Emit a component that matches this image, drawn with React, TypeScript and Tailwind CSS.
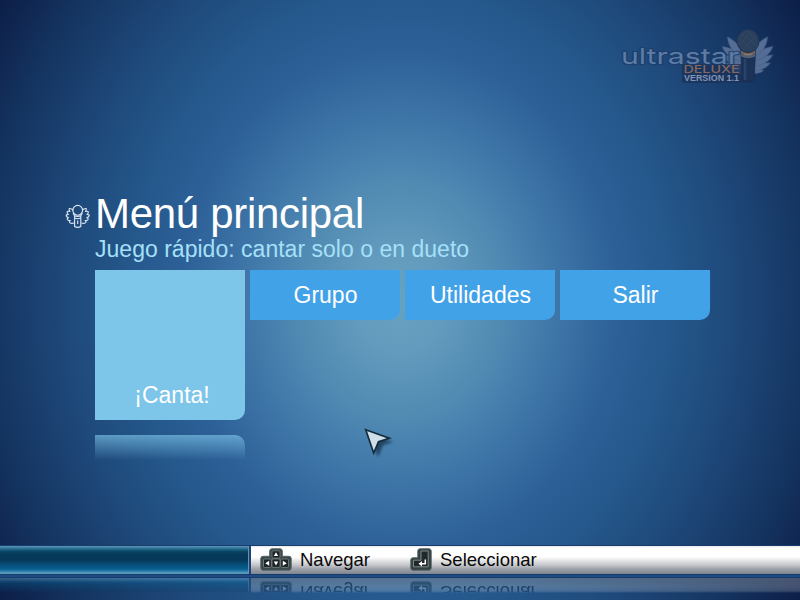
import React from "react";

const FONT = "font-['Liberation_Sans',Arial,sans-serif]";

function Logo() {
  const feathers = [
    "M22 44C17 45 12 44 9.5 41.5C14 40 18 38 22 38Z",
    "M22 42C13 42 6 39 3 34C9 34 17 34 22 36Z",
    "M22 38C11 37 3 32 .5 26C8 27 16 28 22 32Z",
    "M22 33C11 31 2 25 .5 17.6C8 19 16 22 22 27Z",
    "M20 29C12 25 6 17 5.5 8C12 11 18 17 20 23Z",
  ];
  return (
    <svg className="block h-[75px] w-[180px]" viewBox="610 20 180 75">
      {[0, 1].map((side) => (
        <g key={side} transform={side ? "translate(773 29)scale(-1 1)" : "translate(722 29)"}>
          <g fill="#1c3765" stroke="#1c3765" strokeWidth="3" strokeLinejoin="round" opacity=".6">
            {feathers.map((d) => <path key={d} d={d} />)}
          </g>
          <g fill="#536d94" stroke="#46618b" strokeWidth=".5">
            {feathers.map((d) => <path key={d} d={d} />)}
          </g>
        </g>
      ))}
      <rect x="682" y="64" width="71" height="19" rx="3" fill="#1a3159" opacity=".75" />
      <text x="621" y="63.6" fill="#5c7ca5" stroke="#1d3c69" strokeOpacity=".7" strokeWidth="2.6" strokeLinejoin="round" paintOrder="stroke" fontFamily="Inter" fontWeight="400" fontSize="22" textLength="118" lengthAdjust="spacingAndGlyphs">ultrastar</text>
      <text x="683.5" y="73" fill="#86675f" fontFamily="Inter" fontWeight="500" fontSize="10.6" textLength="56" lengthAdjust="spacingAndGlyphs">DELUXE</text>
      <text x="684" y="81" fill="#8294b2" fontFamily="Liberation Sans" fontWeight="700" fontSize="8.6" textLength="55" lengthAdjust="spacingAndGlyphs">VERSION 1.1</text>
      <path d="M740.8 50H755.6L754 80Q748 83 742 80Z" fill="#1c3358" stroke="#172c51" strokeWidth=".8" />
      <path d="M745 59V80" stroke="#29436a" strokeWidth="2.5" />
      <path d="M741 50H755.3V56.5Q748 60 741.2 56.5Z" fill="#526071" />
      <path d="M741.2 50.5Q748 54 755 50.5V53Q748 57 741.2 53Z" fill="#80604c" />
      <path d="M744 54Q748 56 752 54" fill="none" stroke="#8b8078" strokeWidth="1" />
      <ellipse cx="748" cy="41" rx="11" ry="11.6" fill="#2a405d" stroke="#1e3357" />
      <path d="M739 37L752 51M742 33L757 47M746 31L759 42M757 35L743 49M752 31L739 45M747 30L737 40" stroke="#3a506d" strokeWidth=".7" opacity=".6" />
    </svg>
  );
}

function WingedMic() {
  const wing = "M8.3 6.2Q6 4.2 4.2 4.6Q4 6.2 4.8 7.4Q2.6 6.9 2 8Q2.2 9.5 3.4 10.4Q1.2 10.4 1.2 11.8Q1.8 13.3 3.6 13.8Q1.8 14.3 2.4 15.6Q3.5 16.8 5.3 16.6Q3.9 17.5 4.8 18.6Q6.3 19.8 9 19";
  return (
    <svg className="block h-[26px] w-[26px]" viewBox="0 0 26 26" fill="none" stroke="#dbe6f2" strokeWidth="1.15" strokeLinejoin="round">
      <circle cx="12.7" cy="6.3" r="4.9" />
      <path d="M8.2 9L9.6 12V22.6Q12.7 24.3 15.8 22.6V12L17.2 9M9.4 11.8Q12.7 13.2 16 11.8M9.8 14Q12.7 15.5 15.6 14M12.7 16.5V20" />
      <path d={wing} />
      <path d={wing} transform="translate(25.4 0) scale(-1 1)" />
    </svg>
  );
}

function ArrowKeys() {
  return (
    <svg className="block h-[23px] w-[32px] shrink-0" viewBox="0 0 32 23">
      <path d="M12 .8H20Q22.3.8 22.3 3V8.3H29Q31.2 8.3 31.2 10.5V20Q31.2 22.2 29 22.2H3Q.8 22.2.8 20V10.5Q.8 8.3 3 8.3H9.7V3Q9.7.8 12 .8Z" fill="#39484a" stroke="#536264" strokeWidth="1" />
      <g fill="#1b2326" stroke="#87908f" strokeWidth=".7">
        <rect x="12" y="2.8" width="8" height="7.3" rx="1" />
        <rect x="3.5" y="11" width="7.8" height="8.4" rx="1" />
        <rect x="12" y="11" width="8" height="8.4" rx="1" />
        <rect x="20.7" y="11" width="7.8" height="8.4" rx="1" />
      </g>
      <path d="M16 4.2L18.2 7.9H13.8ZM5.2 15.2L9.2 12.7V17.7ZM26.8 15.2L22.8 12.7V17.7ZM16 17.5L13.8 13.5H18.2Z" fill="#fff" />
    </svg>
  );
}

function EnterKey() {
  return (
    <svg className="block h-[23px] w-[22px] shrink-0" viewBox="0 0 22 23">
      <path d="M10 .8H19Q21.2.8 21.2 3V20Q21.2 22.2 19 22.2H3Q.8 22.2.8 20V12Q.8 9.8 3 9.8H7.8V3Q7.8.8 10 .8Z" fill="#333f41" stroke="#536264" />
      <path d="M11 3H18.2V18.8H3.5V12.2H11Z" fill="#20282b" stroke="#8b9493" strokeWidth=".9" />
      <path d="M15.3 11.5V15.8H11" fill="none" stroke="#fff" strokeWidth="1.5" />
      <path d="M8.5 15.8L12 13.1V18.5Z" fill="#fff" />
    </svg>
  );
}

function StatusBar() {
  return (
    <div className="flex h-7 w-full">
      <div className="h-7 w-[249px] border-r border-[#5f96b3] bg-[linear-gradient(180deg,#6098b8_0,#4787a9_1px,#256a8d_3px,#0b4969_5px,#073b58_8px,#06385a_14px,#08507c_19px,#075e8f_23px,#277baa_25px,#5b9abf_27px,#5b9abf_28px)]" />
      <div className="h-7 w-[2px] bg-[#1f4377]" />
      <div className="flex h-7 flex-1 items-center bg-[linear-gradient(180deg,#e6e6e6_0,#fff_2px,#fff_11px,#e9e9eb_14px,#c5c7cb_19px,#9da1a9_23px,#7f8590_28px)] pl-[9px]">
        <div className="flex w-[150px] items-center gap-[8px]">
          <div className="-mt-[2px]"><ArrowKeys /></div>
          <span className="text-[18.5px] leading-7 text-[#090909]">Navegar</span>
        </div>
        <div className="flex items-center gap-[8px]">
          <div className="-mt-[2px]"><EnterKey /></div>
          <span className="text-[18.5px] leading-7 text-[#090909]">Seleccionar</span>
        </div>
      </div>
    </div>
  );
}

export default function App() {
  return (
    <div className={`${FONT} relative flex h-[600px] w-[800px] flex-col overflow-hidden bg-[radial-gradient(478px_550px_at_400px_300px,#68a2c0_0,#629bbd_45px,#538cb3_96px,#4780ae_130px,#3a70a4_172px,#2c6097_218px,#265a8e_261px,#1d4677_345px,#14335f_415px,#0c1e47_478px)]`}>
      <header className="flex h-[175px] justify-end pr-[10px] pt-5"><Logo /></header>
      <main className="flex h-[370px] flex-col">
        <div className="flex h-[60px] items-start pl-[65px]">
          <div className="mt-[29px] w-[30px]"><WingedMic /></div>
          <h1 className="mt-[9px] text-[42px] leading-[60px] tracking-[-0.3px] whitespace-nowrap text-white">Menú principal</h1>
        </div>
        <p className="h-[35px] pl-[95px] text-[23px] leading-[28px] tracking-[0.02px] whitespace-nowrap text-[#a5e0f8]">Juego rápido: cantar solo o en dueto</p>
        <nav className="flex items-start gap-[5px] pl-[95px] text-[23px] text-white">
          <div className="w-[150px]">
            <button className="flex h-[150px] w-full items-end justify-center rounded-br-[10px] bg-[#7dc5e9] pb-2 pl-1 leading-[34px]">¡Canta!</button>
            <div className="mt-[15px] h-[25px] rounded-tr-[10px] bg-linear-to-b from-[#7dc5e9]/65 to-[#7dc5e9]/0" />
          </div>
          {["Grupo", "Utilidades", "Salir"].map((label) => (
            <button key={label} className="flex h-[50px] w-[150px] justify-center rounded-br-[10px] bg-[#42a2e7] pl-px leading-[50px]">{label}</button>
          ))}
        </nav>
      </main>
      <footer className="flex h-[55px] flex-col">
        <div className="h-px shrink-0 bg-[#183c6d]" />
        <div className="shrink-0"><StatusBar /></div>
        <div className="h-px shrink-0 bg-[#153a69]" />
        <div className="h-[2px] shrink-0 bg-[#1e4b82]" />
        <div className="h-px shrink-0 bg-[#173b6d]" />
        <div aria-hidden="true" className="h-7 shrink-0 -scale-y-100 mask-[linear-gradient(0deg,rgba(0,0,0,.5)_0,rgba(0,0,0,.2)_13px,transparent_15px)]"><StatusBar /></div>
      </footer>
      <svg className="absolute left-[360px] top-[424px] h-[38px] w-[38px] overflow-visible" viewBox="0 0 38 38">
        <path d="M8 9L33 18L23 21L18 33Z" fill="#102b43" opacity=".7" className="blur-[1.5px]" />
        <path d="M5.7 5.7L29.3 14.3L18.5 17.8L13.7 29Z" fill="#cfdeeb" stroke="#142b3a" strokeWidth="1.7" strokeLinejoin="miter" />
      </svg>
    </div>
  );
}
